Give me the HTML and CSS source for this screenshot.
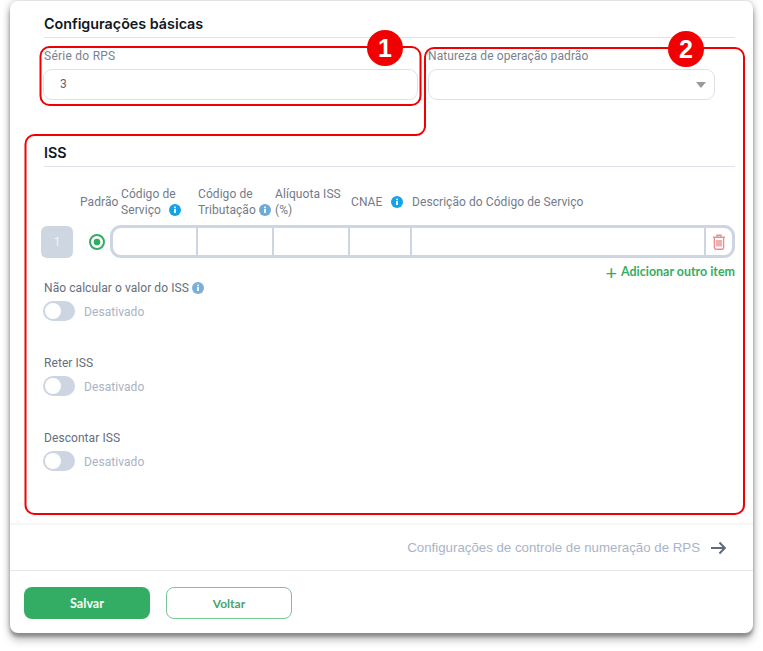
FILE: index.html
```html
<!DOCTYPE html>
<html lang="pt-BR">
<head>
<meta charset="utf-8">
<title>Configurações básicas</title>
<link rel="stylesheet" href="styles.css">
</head>
<body>
<main class="card">
  <div class="content">
    <section class="basic">
      <h2 class="section-title">Configurações básicas</h2>
      <div class="fields">
        <div class="field field-left">
          <label class="label label-serie">Série do RPS</label>
          <div class="input input-value">3</div>
        </div>
        <div class="field field-right">
          <label class="label">Natureza de operação padrão</label>
          <div class="input select"><span class="caret"></span></div>
        </div>
      </div>
    </section>
    <section class="iss">
      <h2 class="section-title">ISS</h2>
      <div class="col-heads">
        <span></span>
        <span class="head">Padrão</span>
        <span class="head">Código de<br>Serviço <svg class="info info-a" viewBox="0 0 12 12"><circle cx="6" cy="6" r="6"/><rect x="5.1" y="5" width="1.8" height="4" fill="#fff"/><rect x="5.1" y="2.6" width="1.8" height="1.6" fill="#fff"/></svg></span>
        <span class="head">Código de<br>Tributação <svg class="info info-b" viewBox="0 0 12 12"><circle cx="6" cy="6" r="6"/><rect x="5.1" y="5" width="1.8" height="4" fill="#fff"/><rect x="5.1" y="2.6" width="1.8" height="1.6" fill="#fff"/></svg></span>
        <span class="head">Alíquota ISS<br>(%)</span>
        <span class="head">CNAE <svg class="info info-a info-gap" viewBox="0 0 12 12"><circle cx="6" cy="6" r="6"/><rect x="5.1" y="5" width="1.8" height="4" fill="#fff"/><rect x="5.1" y="2.6" width="1.8" height="1.6" fill="#fff"/></svg></span>
        <span class="head">Descrição do Código de Serviço</span>
      </div>
      <div class="item-row">
        <div class="index">1</div>
        <span class="radio"></span>
        <div class="cells">
          <div class="cell c1"></div>
          <div class="cell c2"></div>
          <div class="cell c3"></div>
          <div class="cell c4"></div>
          <div class="cell c5"></div>
          <div class="cell c6">
            <svg class="trash" viewBox="0 0 14 16" fill="none" stroke="#e98f93" stroke-width="1.4"><path d="M1 3.2h12M5 3V1.2h4V3M2.4 3.4v10.4c0 .8.5 1.4 1.2 1.4h6.8c.7 0 1.2-.6 1.2-1.4V3.4M5 6v6.4M7 6v6.4M9 6v6.4"/></svg>
          </div>
        </div>
      </div>
      <div class="add-row"><span class="add"><span class="plus">+</span>Adicionar outro item</span></div>
      <div class="toggle-group">
        <div class="toggle-label">Não calcular o valor do ISS <svg class="info info-c" viewBox="0 0 12 12"><circle cx="6" cy="6" r="6"/><rect x="5.1" y="5" width="1.8" height="4" fill="#fff"/><rect x="5.1" y="2.6" width="1.8" height="1.6" fill="#fff"/></svg></div>
        <div class="toggle-line"><span class="toggle"><span class="knob"></span></span><span class="state">Desativado</span></div>
      </div>
      <div class="toggle-group">
        <div class="toggle-label">Reter ISS</div>
        <div class="toggle-line"><span class="toggle"><span class="knob"></span></span><span class="state">Desativado</span></div>
      </div>
      <div class="toggle-group">
        <div class="toggle-label">Descontar ISS</div>
        <div class="toggle-line"><span class="toggle"><span class="knob"></span></span><span class="state">Desativado</span></div>
      </div>
    </section>
  </div>
  <div class="next-row">
    <span class="next-text">Configurações de controle de numeração de RPS</span>
    <svg class="arrow" viewBox="0 0 16 14" fill="none" stroke="#5d6a80" stroke-width="2.1"><path d="M0 7h14.5M9 1.2 14.8 7 9 12.8"/></svg>
  </div>
  <footer class="actions">
    <button class="btn btn-primary">Salvar</button>
    <button class="btn btn-outline">Voltar</button>
  </footer>
</main>
<svg class="overlay" viewBox="0 0 763 651" fill="none">
  <rect x="40.5" y="47" width="380" height="58" rx="9" stroke="#f00000" stroke-width="2"/>
  <path d="M425 127V57a9 9 0 0 1 9-9h301a9 9 0 0 1 9 9v448a9 9 0 0 1-9 9H34.5a9 9 0 0 1-9-9V144a9 9 0 0 1 9-9H416a9 9 0 0 0 9-8Z" stroke="#f00000" stroke-width="2"/>
  <circle cx="385" cy="48" r="18" fill="#f00000"/>
  <text x="385" y="57" class="badge-num">1</text>
  <circle cx="686" cy="49" r="18" fill="#f00000"/>
  <text x="686" y="58" class="badge-num">2</text>
</svg>
</body>
</html>
```
FILE: styles.css
```css
* { box-sizing: border-box; }
html, body { margin: 0; padding: 0; }
body {
  position: relative;
  width: 763px;
  height: 651px;
  padding: 1px 10px 0;
  overflow: hidden;
  background: #fff;
  font-family: Roboto, "Liberation Sans", sans-serif;
  color: #6f7785;
}
.card {
  display: flex;
  flex-direction: column;
  width: 743px;
  height: 632px;
  background: #fff;
  border-radius: 8px;
  box-shadow: 0 0 7px rgba(0, 0, 0, .24), 0 4px 3px rgba(0, 0, 0, .2), 0 7px 9px rgba(0, 0, 0, .26);
}
.content {
  height: 524px;
  padding: 0 18px 0 33px;
  border-bottom: 2px solid #f5f6f8;
}
.section-title {
  margin: 0;
  height: 17px;
  font: 600 14.3px/17px Inter, Roboto, sans-serif;
  color: #12171f;
  box-sizing: content-box;
  border-bottom: 1px solid #dfe4ea;
}
.basic { padding-top: 14px; }
.basic .section-title { padding-bottom: 5px; margin-left: 1px; }
.fields { display: flex; gap: 10px; padding-top: 10px; }
.label { display: block; height: 21px; font-size: 12px; line-height: 16px; color: #7a8290; letter-spacing: .1px; }
.label-serie { margin-left: 1px; letter-spacing: .25px; }
.field-left { width: 375px; }
.field-right { width: 287px; }
.input {
  height: 31px;
  border: 1px solid #dde2ea;
  border-radius: 9px;
  background: #fff;
}
.input-value { padding-left: 16px; font-size: 12px; line-height: 29px; color: #5b6471; }
.select { display: flex; justify-content: flex-end; align-items: center; padding-right: 8px; }
.caret { width: 0; height: 0; border-left: 5px solid transparent; border-right: 5px solid transparent; border-top: 6px solid #9a9a9a; }
.iss { margin-top: 44px; }
.iss .section-title { padding-bottom: 5px; margin-left: 1px; }
.col-heads {
  display: grid;
  grid-template-columns: 39px 41px 77px 77px 76px 61px 1fr;
  align-items: center;
  height: 41px;
  margin-top: 14px;
  margin-left: -2px;
}
.head { font-size: 12px; line-height: 16px; color: #737b89; white-space: nowrap; letter-spacing: .07px; }
.info { width: 12px; height: 12px; vertical-align: -2px; }
.info-a { fill: #14a3e6; margin-left: 5px; }
.info-gap { margin-left: 6px; }
.info-b { fill: #6dabd6; }
.info-c { fill: #7aafd9; }
.item-row { display: flex; align-items: center; height: 33px; margin-top: 3px; margin-left: -2px; }
.index {
  width: 32px;
  height: 32px;
  border-radius: 6px;
  background: #ced6e1;
  color: #f3f5f8;
  font-size: 12px;
  line-height: 32px;
  text-align: center;
}
.radio {
  width: 16px;
  height: 16px;
  margin-left: 16px;
  border: 2px solid #34ad64;
  border-radius: 50%;
  background: radial-gradient(circle, #34ad64 0 3.1px, #fff 3.7px);
}
.cells {
  display: flex;
  width: 625px;
  height: 33px;
  margin-left: 5px;
  border: 3px solid #ccd5e1;
  border-radius: 11px;
}
.cell { border-right: 2px solid #ccd5e1; }
.c1 { width: 85px; }
.c2, .c3 { width: 76px; }
.c4 { width: 62px; }
.c5 { width: 294px; }
.c6 { flex: 1; border-right: 0; display: flex; align-items: center; justify-content: center; }
.trash { width: 14px; height: 16px; }
.add-row { display: flex; justify-content: flex-end; height: 17px; margin-top: 6px; }
.add { display: flex; align-items: center; height: 16px; font: 700 12.45px/16px Lato, sans-serif; color: #35ad64; }
.plus { font-size: 20px; font-weight: 400; margin-right: 4px; line-height: 16px; }
.toggle-group { height: 75px; margin-left: 1px; }
.toggle-label { height: 20px; font-size: 12px; line-height: 15px; color: #666e7c; letter-spacing: .07px; }
.toggle-line { display: flex; align-items: center; gap: 9px; height: 20px; }
.toggle { display: block; width: 32px; height: 20px; margin-left: -1px; padding: 2px; border-radius: 10px; background: #ccd5e1; }
.knob { display: block; width: 16px; height: 16px; border-radius: 50%; background: #fff; }
.state { margin-top: 2px; font-size: 12px; letter-spacing: .07px; color: #aab3c4; }
.next-row {
  display: flex;
  align-items: center;
  justify-content: flex-end;
  gap: 11px;
  height: 46px;
  padding-right: 27px;
  border-bottom: 1px solid #e3e7ed;
}
.next-text { font: 13.27px "Liberation Sans", sans-serif; color: #a9b4c7; }
.arrow { width: 15px; height: 14px; }
.actions { display: flex; gap: 16px; padding: 16px 0 0 14px; }
.btn {
  width: 126px;
  height: 32px;
  padding: 0;
  border-radius: 8px;
  font: 700 12px Lato, sans-serif;
}
.btn-primary { border: 0; background: #34ad64; color: #f4fbf6; font-size: 12.6px; }
.btn-outline { border: 1px solid #74c794; background: #fff; color: #45a56f; }
.overlay { position: absolute; left: 0; top: 0; width: 763px; height: 651px; pointer-events: none; }
.badge-num { fill: #fff; font: 700 25px "Liberation Sans", sans-serif; text-anchor: middle; }
```
